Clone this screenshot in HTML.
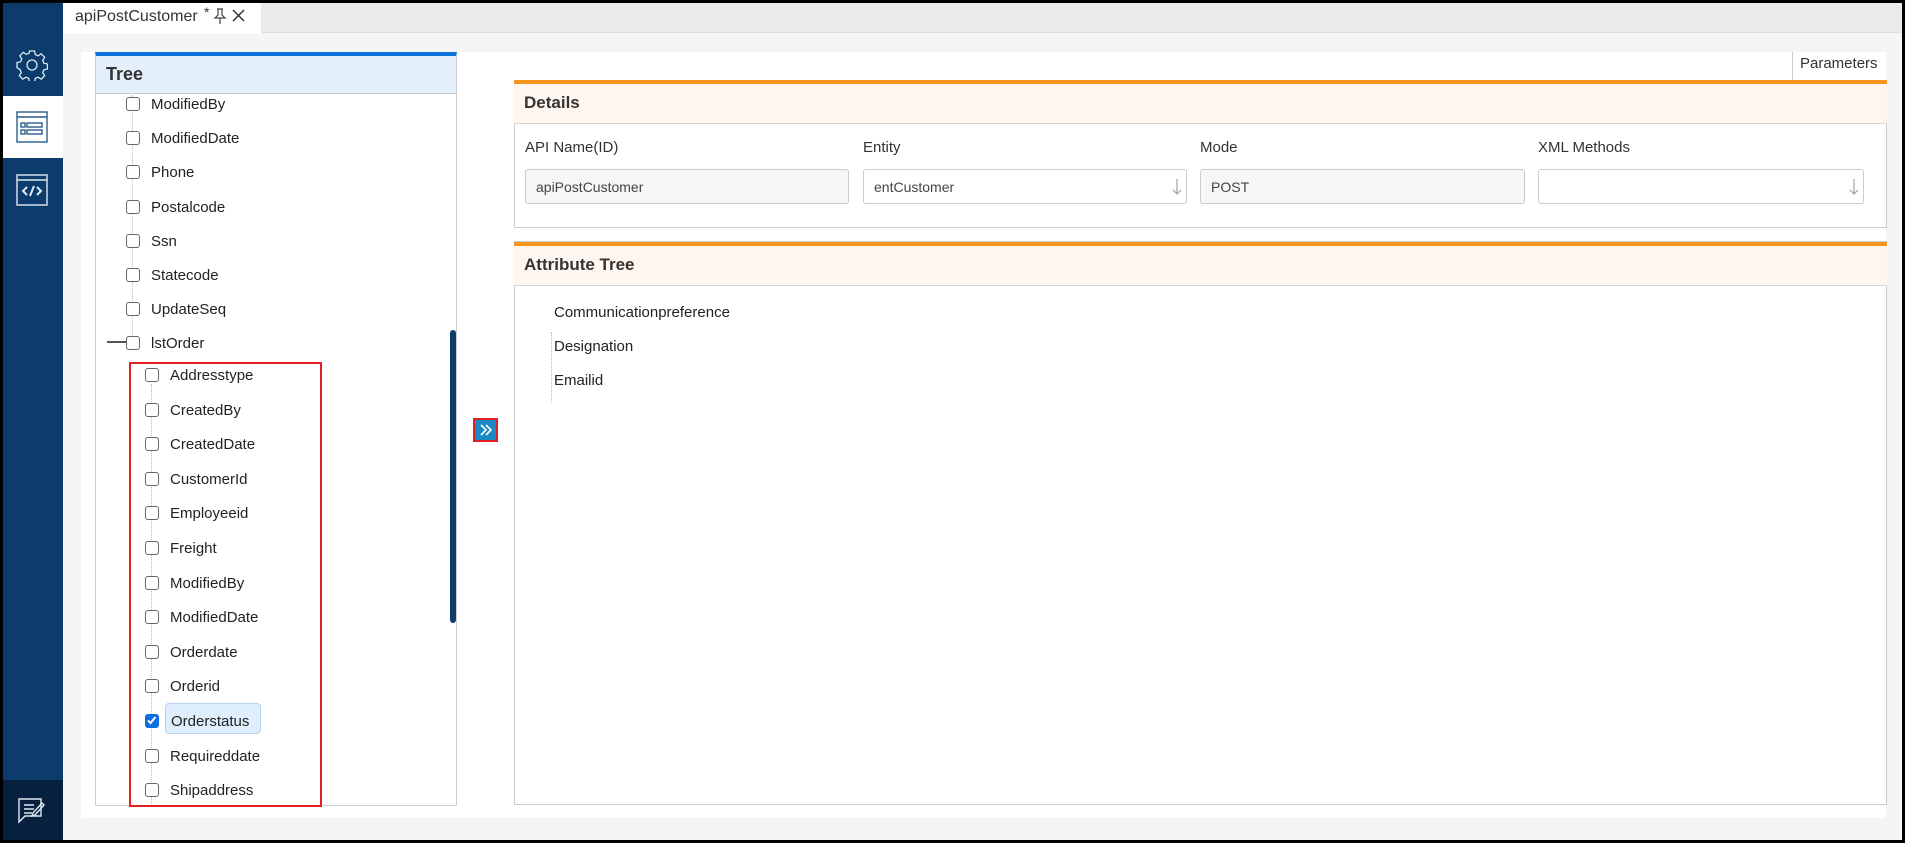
<!DOCTYPE html>
<html><head><meta charset="utf-8"><style>
*{margin:0;padding:0;box-sizing:border-box}
body{width:1905px;height:843px;background:#000;font-family:"Liberation Sans",Arial,sans-serif;overflow:hidden;position:relative;color:#222}
.abs{position:absolute}
#frame{position:absolute;left:3px;top:3px;width:1899px;height:837px;background:#f5f5f5}
.side{left:3px;top:3px;width:60px;height:837px;background:#0c3c6b}
.ti{position:absolute;font-size:15px;color:#222;line-height:18px}
.cb{position:absolute;width:14px;height:14px;border:1.5px solid #666;border-radius:3px;background:#fff}
.lbl{position:absolute;font-size:15px;color:#333}
.inp{position:absolute;top:169px;height:35px;border:1px solid #ccc;border-radius:3px;font-size:14px;color:#444;padding:9px 10px}
.hdr{position:absolute;background:#fff6ef;border-top:4px solid #f7941d;border-bottom:1px solid #d6d6d6;font-size:17px;font-weight:bold;color:#333;padding-left:10px}
.t1 .cb{left:126px}.t1 .ti{left:151px;margin-top:3px}
.t2 .cb{left:145px}.t2 .ti{left:170px;margin-top:3px}
</style></head><body>
<div id="frame"></div>
<div class="abs" style="left:63px;top:3px;width:1839px;height:30px;background:#ebebeb;border-bottom:1px solid #ddd"></div>
<div class="abs" style="left:63px;top:3px;width:198px;height:31px;background:#fff"></div>
<div class="abs" style="left:75px;top:8px;font-size:16px;color:#333">apiPostCustomer</div>
<div class="abs" style="left:204px;top:4px;font-size:14px;color:#333">*</div>
<svg class="abs" style="left:213px;top:8px" width="14" height="16" viewBox="0 0 14 16"><path d="M4 1h6M5 1v6l-3 3h10l-3-3V1M7 10v6" fill="none" stroke="#444" stroke-width="1.2"/></svg>
<svg class="abs" style="left:232px;top:9px" width="13" height="13" viewBox="0 0 13 13"><path d="M1 1l11 11M12 1L1 12" stroke="#333" stroke-width="1.5"/></svg>
<div class="abs side"></div>
<div class="abs" style="left:3px;top:96px;width:60px;height:62px;background:#fff"></div>
<div class="abs" style="left:3px;top:780px;width:60px;height:60px;background:#06203d"></div>
<svg class="abs" style="left:16px;top:49px" width="32" height="32" viewBox="0 0 32 32" fill="none" stroke="#dfe8f2" stroke-width="1.3"><path d="M13.5 2h5l.8 3.6 2.8 1.2 3.1-2 3.5 3.5-2 3.1 1.2 2.8 3.6.8v5l-3.6.8-1.2 2.8 2 3.1-3.5 3.5-3.1-2-2.8 1.2-.8 3.6h-5l-.8-3.6-2.8-1.2-3.1 2-3.5-3.5 2-3.1-1.2-2.8L1 18.5v-5l3.6-.8 1.2-2.8-2-3.1 3.5-3.5 3.1 2 2.8-1.2z"/><circle cx="16" cy="16" r="5"/></svg>
<svg class="abs" style="left:16px;top:111px" width="32" height="32" viewBox="0 0 32 32" fill="none" stroke="#2a5d8f" stroke-width="1.4"><rect x="1" y="1" width="30" height="30"/><path d="M1 6h30"/><rect x="5" y="12" width="4" height="4"/><rect x="5" y="19" width="4" height="4"/><rect x="11" y="12" width="15" height="4"/><rect x="11" y="19" width="15" height="4"/></svg>
<svg class="abs" style="left:16px;top:174px" width="32" height="32" viewBox="0 0 32 32" fill="none" stroke="#dfe8f2" stroke-width="1.4"><rect x="1" y="1" width="30" height="30"/><path d="M1 6h30"/><path d="M11 13l-4 4 4 4M21 13l4 4-4 4M18 12l-4 10" stroke-width="2"/></svg>
<svg class="abs" style="left:17px;top:796px" width="30" height="28" viewBox="0 0 30 28" fill="none" stroke="#dfe8f2" stroke-width="1.4"><path d="M2 3h22v17H8l-6 6z"/><path d="M7 9h10M7 13h10M7 17h8M16 17l9-10 2 2-9 10-3 1z"/></svg>
<div class="abs" style="left:81px;top:52px;width:1805px;height:766px;background:#fff"></div>
<div class="abs" style="left:95px;top:52px;width:362px;height:754px;border:1px solid #ccc;border-top:4px solid #0a72d6;background:#fff"></div>
<div class="abs" style="left:96px;top:56px;width:360px;height:38px;background:#e3f0fc;border-bottom:1px solid #ccc;font-size:18px;font-weight:bold;color:#333;padding:8px 10px">Tree</div>
<div class="abs" style="left:132px;top:95px;height:250px;border-left:1px dotted #bbb"></div>
<div class="abs" style="left:151px;top:384px;height:420px;border-left:1px dotted #bbb"></div>
<div class="abs" style="left:107px;top:341px;width:19px;height:2px;background:#555"></div>
<div class="abs" style="left:450px;top:330px;width:6px;height:293px;background:#0c3c6b;border-radius:3px"></div>
<div class="abs" style="left:165px;top:703px;width:96px;height:31px;background:#deeefc;border:1px solid #b3d4f5;border-radius:4px"></div>
<div class="abs" style="left:129px;top:362px;width:193px;height:445px;border:2.5px solid #e31e24"></div>
<div class="t1">
<div class="cb" style="top:97px"></div><div class="ti" style="top:93px">ModifiedBy</div>
<div class="cb" style="top:131px"></div><div class="ti" style="top:127px">ModifiedDate</div>
<div class="cb" style="top:165px"></div><div class="ti" style="top:161px">Phone</div>
<div class="cb" style="top:200px"></div><div class="ti" style="top:196px">Postalcode</div>
<div class="cb" style="top:234px"></div><div class="ti" style="top:230px">Ssn</div>
<div class="cb" style="top:268px"></div><div class="ti" style="top:264px">Statecode</div>
<div class="cb" style="top:302px"></div><div class="ti" style="top:298px">UpdateSeq</div>
<div class="cb" style="top:336px"></div><div class="ti" style="top:332px">lstOrder</div>
</div>
<div class="t2">
<div class="cb" style="top:368px"></div><div class="ti" style="top:364px">Addresstype</div>
<div class="cb" style="top:403px"></div><div class="ti" style="top:399px">CreatedBy</div>
<div class="cb" style="top:437px"></div><div class="ti" style="top:433px">CreatedDate</div>
<div class="cb" style="top:472px"></div><div class="ti" style="top:468px">CustomerId</div>
<div class="cb" style="top:506px"></div><div class="ti" style="top:502px">Employeeid</div>
<div class="cb" style="top:541px"></div><div class="ti" style="top:537px">Freight</div>
<div class="cb" style="top:576px"></div><div class="ti" style="top:572px">ModifiedBy</div>
<div class="cb" style="top:610px"></div><div class="ti" style="top:606px">ModifiedDate</div>
<div class="cb" style="top:645px"></div><div class="ti" style="top:641px">Orderdate</div>
<div class="cb" style="top:679px"></div><div class="ti" style="top:675px">Orderid</div>
<div class="cb" style="top:714px;background:#0a6fe0;border-color:#0a6fe0"><svg width="11" height="11" viewBox="0 0 11 11" style="position:absolute;left:0;top:0"><path d="M2 5.5l2.5 2.5 5-6" fill="none" stroke="#fff" stroke-width="2"/></svg></div><div class="ti" style="top:710px;left:171px">Orderstatus</div>
<div class="cb" style="top:749px"></div><div class="ti" style="top:745px">Requireddate</div>
<div class="cb" style="top:783px"></div><div class="ti" style="top:779px">Shipaddress</div>
</div>
<div class="abs" style="left:473px;top:418px;width:25px;height:24px;border:2px solid #e31e24;background:#1a8ac4"></div>
<svg class="abs" style="left:478px;top:422px" width="15" height="16" viewBox="0 0 15 16" fill="none" stroke="#fff" stroke-width="1.6"><path d="M3 3l5 5-5 5M8 3l5 5-5 5"/></svg>
<div class="abs" style="left:1792px;top:52px;height:29px;border-left:1px solid #ccc"></div>
<div class="abs" style="left:1800px;top:55px;font-size:15px;color:#333">Parameters</div>
<div class="abs" style="left:514px;top:80px;width:1373px;height:148px;border:1px solid #ccc;background:#fff"></div>
<div class="hdr" style="left:514px;top:80px;width:1373px;height:44px;line-height:38px">Details</div>
<div class="lbl" style="left:525px;top:139px">API Name(ID)</div>
<div class="lbl" style="left:863px;top:139px">Entity</div>
<div class="lbl" style="left:1200px;top:139px">Mode</div>
<div class="lbl" style="left:1538px;top:139px">XML Methods</div>
<div class="inp" style="left:525px;width:324px;background:#f6f6f6">apiPostCustomer</div>
<div class="inp" style="left:863px;width:324px;background:#fff">entCustomer</div>
<div class="inp" style="left:1200px;width:325px;background:#f6f6f6">POST</div>
<div class="inp" style="left:1538px;width:326px;background:#fff"></div>
<svg class="abs" style="left:1172px;top:177px" width="10" height="20" viewBox="0 0 10 20" fill="none" stroke="#aaa" stroke-width="1.3"><path d="M5 2v15M1 13l4 4 4-4"/></svg>
<svg class="abs" style="left:1849px;top:177px" width="10" height="20" viewBox="0 0 10 20" fill="none" stroke="#aaa" stroke-width="1.3"><path d="M5 2v15M1 13l4 4 4-4"/></svg>
<div class="abs" style="left:514px;top:241px;width:1373px;height:564px;border:1px solid #ccc;background:#fff"></div>
<div class="hdr" style="left:514px;top:242px;width:1373px;height:44px;line-height:38px">Attribute Tree</div>
<div class="abs" style="left:551px;top:332px;height:70px;border-left:1px dotted #bbb"></div>
<div class="ti" style="left:554px;top:304px">Communicationpreference</div>
<div class="ti" style="left:554px;top:338px">Designation</div>
<div class="ti" style="left:554px;top:372px">Emailid</div>
</body></html>
